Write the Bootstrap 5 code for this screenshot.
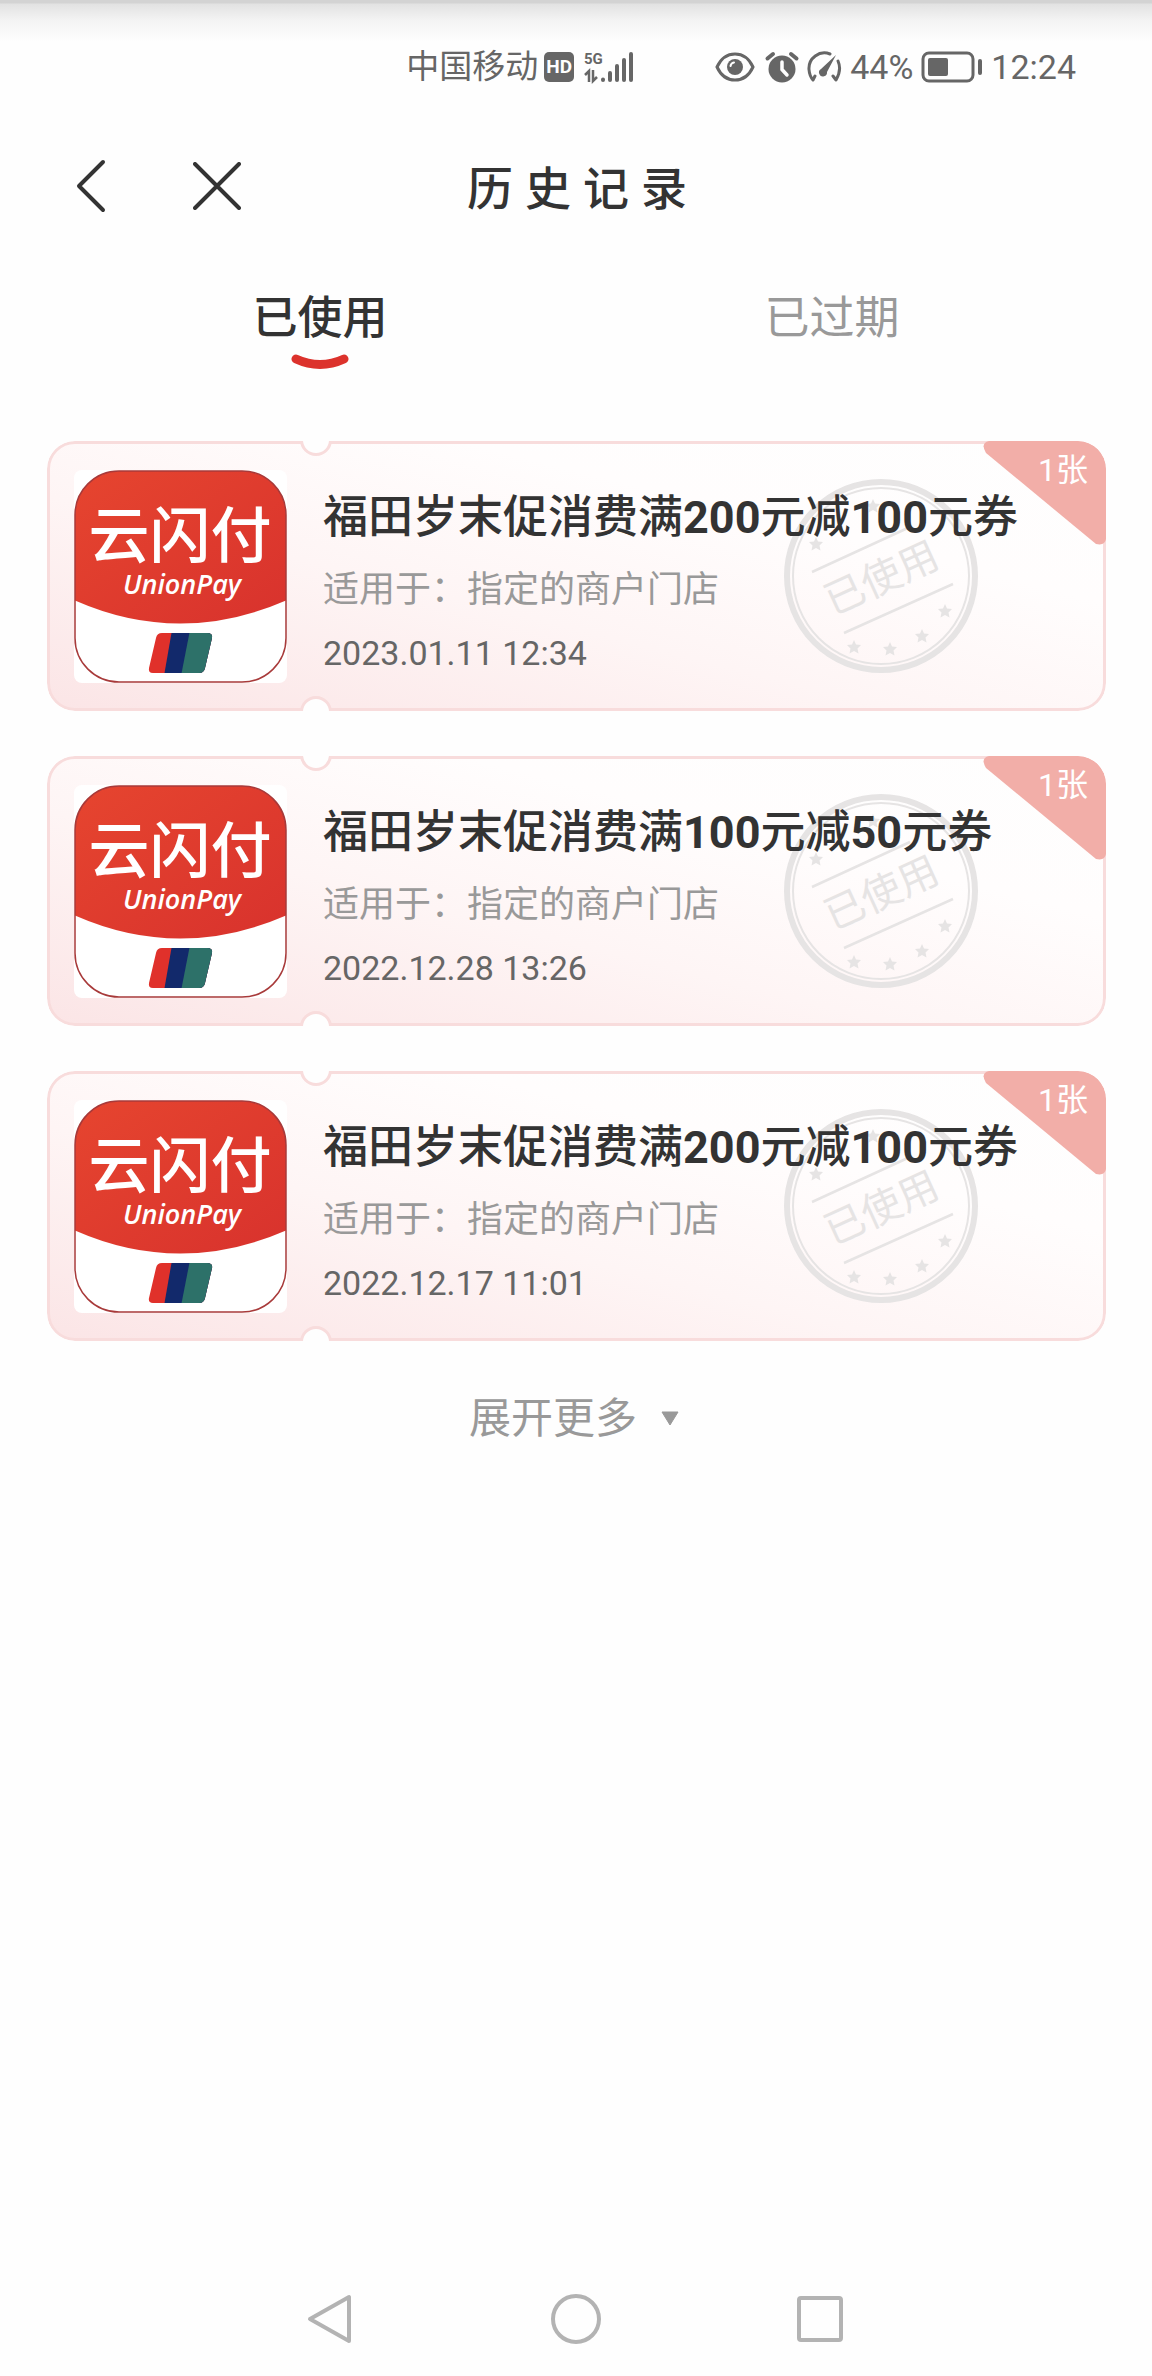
<!DOCTYPE html>
<html lang="zh-CN">
<head>
<meta charset="utf-8">
<meta name="viewport" content="width=device-width, initial-scale=1">
<title>历史记录</title>
<link href="https://cdn.jsdelivr.net/npm/bootstrap@5.3.0/dist/css/bootstrap.min.css" rel="stylesheet">
<style>
  body { background: #fefefe; color: #333; font-family: Roboto, "Noto Sans CJK SC", sans-serif; }
  svg { display: block; flex: none; }
  button, a { color: inherit; }
  .status-bar { background: linear-gradient(#d3d3d3 0, #d3d3d3 3px, #e2e2e2 4px, #f3f3f3 20px, #fefefe 42px); color: #666; font-size: 34px; line-height: 46px; padding: 44px 76px 0 0; }
  .carrier { font-size: 33px; }
  .hd-badge { width: 30px; height: 30px; margin-left: 6px; border-radius: 5px; background: #666; color: #fefefe; font-size: 19px; line-height: 30px; }
  .status-icons { margin-left: 79px; }
  .app-header { display: grid; grid-template-columns: 1fr auto 1fr; align-items: center; height: 100px; margin: 46px 0 50px; padding: 0 64px; }
  .app-title { font-size: 46px; font-weight: 500; letter-spacing: 12px; line-height: 64px; padding: 6px 0 0 14px; }
  .back-btn { margin-left: 12px; }
  .close-btn { margin-left: 87px; }
  .usage-tabs { padding: 0 64px; font-size: 45px; line-height: 66px; }
  .usage-tabs a { color: #999; }
  .usage-tabs a.active { color: #333; font-weight: 500; }
  .coupon-list { padding: 0 46px 0 47px; margin-top: 69px; gap: 45px; }
  .coupon { border: 3px solid #f8dcdc; border-radius: 28px; padding: 26px 24px 25px; gap: 36px; background: linear-gradient(to top right, #fbe5e6 0, #fef5f5 40%, #fffdfd 70%, #fefefe 100%); clip-path: inset(0 round 28px); }
  .coupon::before, .coupon::after { content: ""; position: absolute; left: 250px; width: 32px; height: 32px; border: 3px solid #f8dcdc; border-radius: 50%; background: #fefefe; }
  .coupon::before { top: -20px; }
  .coupon::after { bottom: -20px; }
  .coupon-text { position: relative; z-index: 1; padding-top: 8px; }
  .coupon-name { font-size: 45px; font-weight: 700; line-height: 72px; }
  .coupon-name span { font-weight: 500; }
  .coupon-scope { font-size: 36px; line-height: 72px; color: #999; }
  .coupon-date { font-size: 34px; line-height: 54px; color: #666; }
  .coupon-stamp { position: absolute; right: 124px; top: 34px; color: #e6e4e4; }
  .coupon-count { position: absolute; right: -3px; top: -3px; width: 123px; height: 104px; color: #fff; }
  .coupon-count svg { position: absolute; inset: 0; }
  .coupon-count span { position: absolute; right: 18px; top: 5px; font-size: 32px; line-height: 48px; }
  .more-btn { font-size: 42px; line-height: 64px; color: #999; gap: 24px; margin-top: 46px; }
  .system-nav { gap: 190px; padding-bottom: 30px; }
</style>
</head>
<body class="d-flex flex-column min-vh-100">

<svg width="0" height="0" class="position-absolute" aria-hidden="true">
  <defs>
    <linearGradient id="logoRed" x1="0" y1="0" x2="1" y2="1"><stop offset="0" stop-color="#e6452f"/><stop offset="1" stop-color="#d8322d"/></linearGradient>
    <clipPath id="logoClip"><rect x="1" y="1" width="211" height="211" rx="44"/></clipPath>
    <clipPath id="barsClip"><path d="M88 163H133Q139 163 138 168L131 198Q130 203 125 203H79Q74 203 75 198L82 168Q83 163 88 163Z"/></clipPath>
    <symbol id="logo" viewBox="0 0 213 213">
      <rect width="213" height="213" rx="8" fill="#fff"/>
      <g clip-path="url(#logoClip)">
        <path d="M0 0H213V130Q106 177 0 130Z" fill="url(#logoRed)"/>
      </g>
      <rect x="1" y="1" width="211" height="211" rx="44" fill="none" stroke="#a83a3a" stroke-width="1.5"/>
      <text x="106" y="88" text-anchor="middle" font-family="'Noto Sans CJK SC', sans-serif" font-size="61" font-weight="500" fill="#fff">云闪付</text>
      <text x="108" y="124" text-anchor="middle" font-family="'Open Sans', sans-serif" font-size="27" font-style="italic" font-weight="600" fill="#fff">UnionPay</text>
      <g clip-path="url(#barsClip)">
        <path d="M70 160H145V206H70Z" fill="#e0312b"/>
        <path d="M98 160H145V206H90Z" fill="#12296b"/>
        <path d="M116 160H145V206H107Z" fill="#2d7169"/>
      </g>
    </symbol>
    <path id="star" d="M0-7 2-2.500 7-2 3.500 1.500 4.500 6.500 0 4-4.500 6.500-3.500 1.500-7-2-2-2.500Z"/>
    <symbol id="stamp" viewBox="0 0 196 196">
      <g fill="none" stroke="currentColor">
        <circle cx="98" cy="98" r="94" stroke-width="6"/>
        <circle cx="98" cy="98" r="88" stroke-width="2"/>
        <path d="M29 94 127 49M61 155 170 106" stroke-width="2.500"/>
      </g>
      <text x="98" y="114" transform="rotate(-24.500 98 99)" text-anchor="middle" font-family="'Noto Sans CJK SC', sans-serif" font-size="40" fill="currentColor">已使用</text>
      <g fill="currentColor">
        <use href="#star" x="33" y="66"/><use href="#star" x="90" y="28"/><use href="#star" x="71" y="169"/>
        <use href="#star" x="107" y="171"/><use href="#star" x="139" y="158"/><use href="#star" x="162" y="133"/>
      </g>
    </symbol>
    <symbol id="ribbon" viewBox="0 0 123 104">
      <path d="M6 0H95A28 28 0 0 1 123 28V98Q122 105 113 103L3 12Q-3 2 6 0Z" fill="#f2aea8"/>
    </symbol>
  </defs>
</svg>

<div class="status-bar d-flex align-items-center justify-content-end">
  <span class="carrier">中国移动</span>
  <span class="hd-badge fw-bold text-center">HD</span>
  <svg class="ms-2 overflow-visible" width="54" height="34" viewBox="0 0 54 34" role="img" aria-label="5G">
    <text x="2" y="14" font-family="Roboto, sans-serif" font-size="15" font-weight="700" fill="#666">5G</text>
    <g stroke="#666" stroke-width="4" stroke-linecap="round"><path d="M21 29.500V30M28 23V30M35 16V30M42 10V30M49 4V30"/></g>
    <path d="M7 32V21L3 25M11 20V31L15 27" fill="none" stroke="#666" stroke-width="2.500"/>
  </svg>
  <svg class="status-icons" width="91" height="34" viewBox="0 0 91 34" aria-hidden="true">
    <path d="M2 17Q8 4 20 4T38 17Q32 30 20 30T2 17Z" fill="none" stroke="#666" stroke-width="3"/>
    <circle cx="20" cy="17" r="8" fill="#666"/>
    <path d="M15.500 16Q16 13 19 12.500" fill="none" stroke="#fefefe" stroke-width="2" stroke-linecap="round"/>
    <circle cx="67" cy="19" r="13.500" fill="#666"/>
    <path d="M67 12V19.500L72 25" fill="none" stroke="#fefefe" stroke-width="3.500" stroke-linecap="round"/>
    <path d="M52.500 8.500 58 4M81.500 8.500 76 4" stroke="#666" stroke-width="4" stroke-linecap="round"/>
  </svg>
  <svg width="36" height="34" viewBox="0 0 36 34" aria-hidden="true">
    <path d="M24 4A15.500 15.500 0 0 0 3 19.500Q3.500 26 7 30L9 26M32 11Q36 20 30 30L27 26" fill="none" stroke="#666" stroke-width="3" stroke-linecap="round" stroke-linejoin="round"/>
    <path d="M30 5 21 22A4 4 0 1 1 15 19Z" fill="#666"/>
  </svg>
  <span class="ms-2">44%</span>
  <svg class="ms-2" width="62" height="34" viewBox="0 0 62 34" aria-hidden="true">
    <rect x="2" y="3" width="50" height="28" rx="6" fill="none" stroke="#666" stroke-width="3"/>
    <rect x="7" y="8" width="20" height="18" rx="2" fill="#666"/>
    <rect x="57" y="9" width="4" height="16" rx="2" fill="#666"/>
  </svg>
  <time class="ms-2">12:24</time>
</div>

<header class="app-header">
  <div class="d-flex align-items-center">
    <button type="button" class="btn p-0 border-0 back-btn" aria-label="返回"><svg width="30" height="54" viewBox="0 0 30 54"><path d="M27 3 3 27 27 51" fill="none" stroke="#333" stroke-width="4" stroke-linecap="round" stroke-linejoin="round"/></svg></button>
    <button type="button" class="btn p-0 border-0 close-btn" aria-label="关闭"><svg width="48" height="48" viewBox="0 0 48 48"><path d="M2 2 46 46M46 2 2 46" stroke="#333" stroke-width="4" stroke-linecap="round"/></svg></button>
  </div>
  <h1 class="app-title m-0">历史记录</h1>
</header>

<nav class="usage-tabs d-flex" aria-label="优惠券状态">
  <a href="#" class="active flex-fill w-50 d-flex flex-column align-items-center text-decoration-none" aria-current="page">已使用
    <svg width="58" height="20" viewBox="0 0 58 20" aria-hidden="true"><path d="M5 7Q29 18 53 7" fill="none" stroke="#dc322c" stroke-width="9" stroke-linecap="round"/></svg>
  </a>
  <a href="#" class="flex-fill w-50 text-center text-decoration-none">已过期</a>
</nav>

<main class="d-flex flex-column">
  <ul class="coupon-list list-unstyled d-flex flex-column mb-0">
    <li class="coupon position-relative d-flex">
      <svg width="213" height="213" role="img" aria-label="云闪付"><use href="#logo"/></svg>
      <svg class="coupon-stamp" width="196" height="196" aria-hidden="true"><use href="#stamp"/></svg>
      <div class="coupon-text align-self-center text-nowrap">
        <h2 class="coupon-name m-0"><span>福田岁末促消费满</span>200<span>元减</span>100<span>元券</span></h2>
        <div class="coupon-scope">适用于：指定的商户门店</div>
        <time class="coupon-date d-block">2023.01.11 12:34</time>
      </div>
      <div class="coupon-count"><svg width="123" height="104" aria-hidden="true"><use href="#ribbon"/></svg><span>1张</span></div>
    </li>
    <li class="coupon position-relative d-flex">
      <svg width="213" height="213" role="img" aria-label="云闪付"><use href="#logo"/></svg>
      <svg class="coupon-stamp" width="196" height="196" aria-hidden="true"><use href="#stamp"/></svg>
      <div class="coupon-text align-self-center text-nowrap">
        <h2 class="coupon-name m-0"><span>福田岁末促消费满</span>100<span>元减</span>50<span>元券</span></h2>
        <div class="coupon-scope">适用于：指定的商户门店</div>
        <time class="coupon-date d-block">2022.12.28 13:26</time>
      </div>
      <div class="coupon-count"><svg width="123" height="104" aria-hidden="true"><use href="#ribbon"/></svg><span>1张</span></div>
    </li>
    <li class="coupon position-relative d-flex">
      <svg width="213" height="213" role="img" aria-label="云闪付"><use href="#logo"/></svg>
      <svg class="coupon-stamp" width="196" height="196" aria-hidden="true"><use href="#stamp"/></svg>
      <div class="coupon-text align-self-center text-nowrap">
        <h2 class="coupon-name m-0"><span>福田岁末促消费满</span>200<span>元减</span>100<span>元券</span></h2>
        <div class="coupon-scope">适用于：指定的商户门店</div>
        <time class="coupon-date d-block">2022.12.17 11:01</time>
      </div>
      <div class="coupon-count"><svg width="123" height="104" aria-hidden="true"><use href="#ribbon"/></svg><span>1张</span></div>
    </li>
  </ul>
  <button type="button" class="more-btn btn p-0 border-0 d-flex align-items-center align-self-center pe-1">展开更多
    <svg width="18" height="16" viewBox="0 0 18 16" aria-hidden="true"><path d="M1 1H17L9 14Z" fill="#999" stroke="#999" stroke-linejoin="round"/></svg>
  </button>
</main>

<nav class="system-nav mt-auto d-flex justify-content-center align-items-center" aria-label="系统导航">
  <button type="button" class="btn p-0 border-0" aria-label="返回"><svg width="54" height="54" viewBox="0 0 54 54"><path d="M44 5V49L5 27Z" fill="none" stroke="#b3b3b3" stroke-width="4" stroke-linejoin="round"/></svg></button>
  <button type="button" class="btn p-0 border-0" aria-label="主屏幕"><svg width="54" height="54" viewBox="0 0 54 54"><circle cx="27" cy="27" r="23" fill="none" stroke="#b3b3b3" stroke-width="4"/></svg></button>
  <button type="button" class="btn p-0 border-0" aria-label="最近任务"><svg width="54" height="54" viewBox="0 0 54 54"><rect x="6" y="6" width="42" height="42" rx="2" fill="none" stroke="#b3b3b3" stroke-width="4"/></svg></button>
</nav>
<script src="https://cdn.jsdelivr.net/npm/bootstrap@5.3.0/dist/js/bootstrap.bundle.min.js"></script>
</body>
</html>
